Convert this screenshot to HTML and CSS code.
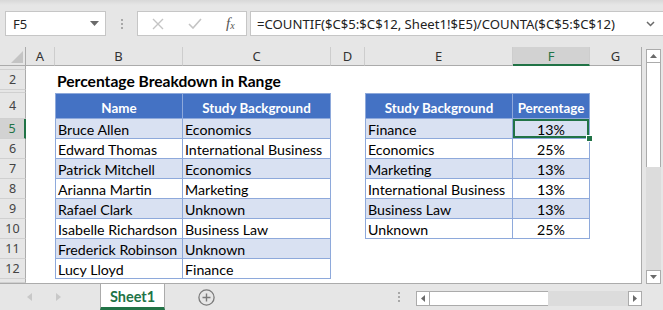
FILE: index.html
```html
<!DOCTYPE html>
<html>
<head>
    <title>Percentage Breakdown in Range</title>
    <link rel="stylesheet" href="styles.css">
</head>
<body>
    <div class="toolbar">
        <div class="namebox">
            <span>F5</span>
            <svg class="caret" width="9" height="5" viewBox="0 0 9 5"><path d="M0 0h9L4.5 5z" fill="#6a6a6a"/></svg>
        </div>
        <div class="grip"><i></i><i></i><i></i></div>
        <div class="fxbox">
            <svg width="12" height="12" viewBox="0 0 12 12"><path d="M1 1l10 10M11 1L1 11" stroke="#c4c4c4" stroke-width="1.4"/></svg>
            <svg width="14" height="11" viewBox="0 0 14 11"><path d="M1 6l4 4 8-9" stroke="#c4c4c4" stroke-width="1.6" fill="none"/></svg>
            <span class="fx">f<sub>x</sub></span>
        </div>
        <div class="formula">
            <span>=COUNTIF($C$5:$C$12, Sheet1!$E5)/COUNTA($C$5:$C$12)</span>
            <svg width="9" height="6" viewBox="0 0 9 6"><path d="M1 1l3.5 3.5L8 1" stroke="#6a6a6a" stroke-width="1.5" fill="none"/></svg>
        </div>
    </div>

    <div class="main">
        <div class="sheet">
            <div class="row r-colhdr">
                <div class="rh corner"><svg width="12" height="12" viewBox="0 0 12 12"><path d="M12 0v12H0z" fill="#c4c4c4"/></svg></div>
                <div class="ch c-a">A</div>
                <div class="ch c-b">B</div>
                <div class="ch c-c">C</div>
                <div class="ch c-d">D</div>
                <div class="ch c-e">E</div>
                <div class="ch c-f sel">F</div>
                <div class="ch c-g last">G</div>
            </div>
            <div class="row r1">
                <div class="rh"></div>
            </div>
            <div class="row r2">
                <div class="rh">2</div>
                <div class="c-a"></div>
                <div class="title">Percentage Breakdown in Range</div>
            </div>
            <div class="row r3">
                <div class="rh"></div>
            </div>
            <div class="row r4">
                <div class="rh">4</div>
                <div class="c-a"></div>
                <div class="c-b t t-first t-head">Name</div>
                <div class="c-c t t-head">Study Background</div>
                <div class="c-d"></div>
                <div class="c-e t t-first t-head">Study Background</div>
                <div class="c-f t t-head">Percentage</div>
            </div>
            <div class="row">
                <div class="rh sel">5</div>
                <div class="c-a"></div>
                <div class="c-b t t-first band">Bruce Allen</div>
                <div class="c-c t band">Economics</div>
                <div class="c-d"></div>
                <div class="c-e t t-first band">Finance</div>
                <div class="c-f t band num active">13%<span class="handle"></span></div>
            </div>
            <div class="row">
                <div class="rh">6</div>
                <div class="c-a"></div>
                <div class="c-b t t-first">Edward Thomas</div>
                <div class="c-c t">International Business</div>
                <div class="c-d"></div>
                <div class="c-e t t-first">Economics</div>
                <div class="c-f t num">25%</div>
            </div>
            <div class="row">
                <div class="rh">7</div>
                <div class="c-a"></div>
                <div class="c-b t t-first band">Patrick Mitchell</div>
                <div class="c-c t band">Economics</div>
                <div class="c-d"></div>
                <div class="c-e t t-first band">Marketing</div>
                <div class="c-f t band num">13%</div>
            </div>
            <div class="row">
                <div class="rh">8</div>
                <div class="c-a"></div>
                <div class="c-b t t-first">Arianna Martin</div>
                <div class="c-c t">Marketing</div>
                <div class="c-d"></div>
                <div class="c-e t t-first">International Business</div>
                <div class="c-f t num">13%</div>
            </div>
            <div class="row">
                <div class="rh">9</div>
                <div class="c-a"></div>
                <div class="c-b t t-first band">Rafael Clark</div>
                <div class="c-c t band">Unknown</div>
                <div class="c-d"></div>
                <div class="c-e t t-first band">Business Law</div>
                <div class="c-f t band num">13%</div>
            </div>
            <div class="row">
                <div class="rh">10</div>
                <div class="c-a"></div>
                <div class="c-b t t-first">Isabelle Richardson</div>
                <div class="c-c t">Business Law</div>
                <div class="c-d"></div>
                <div class="c-e t t-first">Unknown</div>
                <div class="c-f t num">25%</div>
            </div>
            <div class="row">
                <div class="rh">11</div>
                <div class="c-a"></div>
                <div class="c-b t t-first band">Frederick Robinson</div>
                <div class="c-c t band">Unknown</div>
            </div>
            <div class="row">
                <div class="rh">12</div>
                <div class="c-a"></div>
                <div class="c-b t t-first">Lucy Lloyd</div>
                <div class="c-c t">Finance</div>
            </div>
            <div class="row r-rest">
                <div class="rh"></div>
            </div>
        </div>

        <div class="vscroll">
            <div class="sbtn"><svg width="7" height="4" viewBox="0 0 7 4"><path d="M0 4h7L3.5 0z" fill="#6a6a6a"/></svg></div>
            <div class="vthumb"></div>
            <div class="vtrack"></div>
            <div class="sbtn"><svg width="7" height="4" viewBox="0 0 7 4"><path d="M0 0h7L3.5 4z" fill="#6a6a6a"/></svg></div>
        </div>
    </div>

    <div class="tabbar">
        <div class="navs">
            <svg width="5" height="8" viewBox="0 0 5 8"><path d="M5 0v8L0 4z" fill="#c8c8c8"/></svg>
            <svg width="5" height="8" viewBox="0 0 5 8"><path d="M0 0v8l5-4z" fill="#c8c8c8"/></svg>
        </div>
        <div class="tab">Sheet1</div>
        <div class="addsheet">
            <svg width="17" height="17" viewBox="0 0 17 17"><circle cx="8.5" cy="8.5" r="7.6" fill="none" stroke="#7a7a7a" stroke-width="1.3"/><path d="M8.5 4.5v8M4.5 8.5h8" stroke="#7a7a7a" stroke-width="1.4"/></svg>
        </div>
        <div class="grip small"><i></i><i></i><i></i></div>
        <div class="hscroll">
            <div class="sbtn"><svg width="4" height="7" viewBox="0 0 4 7"><path d="M4 0v7L0 3.5z" fill="#6a6a6a"/></svg></div>
            <div class="hthumb"></div>
            <div class="htrack"></div>
            <div class="sbtn"><svg width="4" height="7" viewBox="0 0 4 7"><path d="M0 0v7l4-3.5z" fill="#6a6a6a"/></svg></div>
        </div>
    </div>
</body>
</html>
```

FILE: styles.css
```css
body {
    margin: 0;
    width: 663px;
    height: 310px;
    overflow: hidden;
    background: #e6e6e6;
    font-family: "Lato", sans-serif;
}

/* formula bar */
.toolbar {
    height: 47px;
    box-sizing: border-box;
    padding: 11px 0 0 5px;
    display: flex;
    align-items: flex-start;
    background: linear-gradient(#d8d8d8, #e6e6e6 5px);
    font-family: "Noto Sans", sans-serif;
    font-size: 13px;
    color: #222;
}
.namebox {
    width: 101px;
    height: 25px;
    box-sizing: border-box;
    background: white;
    border: 1px solid #c6c6c6;
    display: flex;
    align-items: center;
    justify-content: space-between;
    padding: 0 6px 0 7px;
}
.grip {
    width: 31px;
    height: 25px;
    display: flex;
    flex-direction: column;
    align-items: center;
    justify-content: center;
    gap: 2px;
}
.grip i {
    width: 2px;
    height: 2px;
    background: #a8a8a8;
}
.fxbox {
    width: 110px;
    height: 25px;
    box-sizing: border-box;
    background: white;
    border: 1px solid #c6c6c6;
    display: flex;
    align-items: center;
    padding: 0 8px 0 14px;
    gap: 24px;
}
.fx {
    font-family: "Liberation Serif", serif;
    font-style: italic;
    font-size: 15px;
    color: #555;
}
.fx sub {
    font-size: 10px;
    vertical-align: -1px;
}
.formula {
    flex: 1;
    margin-left: 3px;
    height: 25px;
    box-sizing: border-box;
    background: white;
    border: 1px solid #c6c6c6;
    border-right: none;
    display: flex;
    align-items: center;
    justify-content: space-between;
    padding: 0 8px 0 6px;
    font-size: 13.15px;
}

/* grid */
.main {
    display: flex;
    height: 237px;
}
.sheet {
    width: 642px;
    box-sizing: border-box;
    background: white;
    border-right: 1px solid #ababab;
    border-bottom: 1px solid #ababab;
    display: flex;
    flex-direction: column;
    font-size: 14.2px;
    color: #000;
}
.row {
    display: flex;
    height: 20px;
    flex-shrink: 0;
}
.r-colhdr { height: 19px; }
.r1 { height: 4px; }
.r3 { height: 3px; }
.r4 { height: 26px; }
.r-rest { flex: 1; }

.rh {
    width: 26px;
    flex-shrink: 0;
    box-sizing: border-box;
    background: #e6e6e6;
    border-right: 1px solid #ababab;
    border-bottom: 1px solid #d0d0d0;
    font-family: "Noto Sans", sans-serif;
    font-size: 12.5px;
    color: #444;
    display: flex;
    align-items: center;
    justify-content: center;
}
.rh.sel {
    background: #d2d2d2;
    color: #217346;
    border-right: 2px solid #217346;
}
.corner {
    align-items: flex-end;
    justify-content: flex-end;
    padding: 0 2px 2px 0;
    border-bottom-color: #ababab;
}
.ch {
    box-sizing: border-box;
    background: #e6e6e6;
    border-right: 1px solid #cdcdcd;
    border-bottom: 1px solid #ababab;
    font-family: "Noto Sans", sans-serif;
    font-size: 13px;
    color: #333;
    display: flex;
    align-items: center;
    justify-content: center;
}
.ch.sel {
    background: #d2d2d2;
    color: #217346;
    border-bottom: 2px solid #217346;
}
.ch.last { border-right: none; }

.c-a { width: 29px; flex-shrink: 0; }
.c-b { width: 128px; flex-shrink: 0; }
.c-c { width: 148px; flex-shrink: 0; }
.c-d { width: 34px; flex-shrink: 0; }
.c-e { width: 148px; flex-shrink: 0; }
.c-f { width: 77px; flex-shrink: 0; }
.c-g { flex: 1; }

.title {
    font-weight: bold;
    font-size: 15.6px;
    padding: 1px 2px 0;
    display: flex;
    align-items: center;
    white-space: nowrap;
}

/* excel table cells */
.t {
    box-sizing: border-box;
    border-right: 1px solid #8ea9db;
    border-bottom: 1px solid #8ea9db;
    padding: 1px 2px 0;
    display: flex;
    align-items: center;
    white-space: nowrap;
    overflow: hidden;
    position: relative;
}
.t-first { border-left: 1px solid #8ea9db; }
.t-head {
    background: #4472c4;
    color: white;
    font-weight: bold;
    font-size: 13.4px;
    justify-content: center;
    border-top: 1px solid #8ea9db;
    padding-top: 4px;
}
.band { background: #d9e1f2; }
.num { justify-content: center; }
.active {
    overflow: visible;
    box-shadow: inset 0 0 0 2px #217346;
}
.handle {
    position: absolute;
    right: -4px;
    bottom: -4px;
    width: 5px;
    height: 5px;
    background: #217346;
    border: 1px solid white;
    z-index: 2;
}

/* scrollbars */
.vscroll {
    flex: 1;
    display: flex;
    flex-direction: column;
    padding: 2px 2px 0 4px;
}
.sbtn {
    box-sizing: border-box;
    background: white;
    border: 1px solid #ababab;
    display: flex;
    align-items: center;
    justify-content: center;
    flex-shrink: 0;
}
.vscroll .sbtn { height: 14px; }
.vthumb {
    height: 104px;
    background: white;
    border: 1px solid #ababab;
    border-top: none;
    border-bottom: none;
}
.vtrack {
    flex: 1;
    background: #dcdcdc;
}

.tabbar {
    height: 26px;
    display: flex;
    align-items: stretch;
}
.navs {
    width: 100px;
    display: flex;
    align-items: center;
    gap: 24px;
    padding-left: 27px;
    box-sizing: border-box;
}
.tab {
    width: 65px;
    box-sizing: border-box;
    background: white;
    border-left: 1px solid #ababab;
    border-right: 1px solid #ababab;
    border-bottom: 3px solid #217346;
    color: #217346;
    font-weight: bold;
    font-size: 14.5px;
    display: flex;
    align-items: center;
    justify-content: center;
    padding-top: 2px;
}
.addsheet {
    width: 83px;
    display: flex;
    align-items: center;
    padding-left: 33px;
    box-sizing: border-box;
}
.grip.small {
    width: 10px;
    height: 26px;
    margin-left: 146px;
}
.hscroll {
    width: 226px;
    height: 15px;
    margin: 7px 0 0 12px;
    display: flex;
}
.hscroll .sbtn { width: 14px; }
.hthumb {
    width: 118px;
    background: white;
    border-top: 1px solid #ababab;
    border-bottom: 1px solid #ababab;
    box-sizing: border-box;
}
.htrack {
    flex: 1;
    background: #dcdcdc;
}
```
